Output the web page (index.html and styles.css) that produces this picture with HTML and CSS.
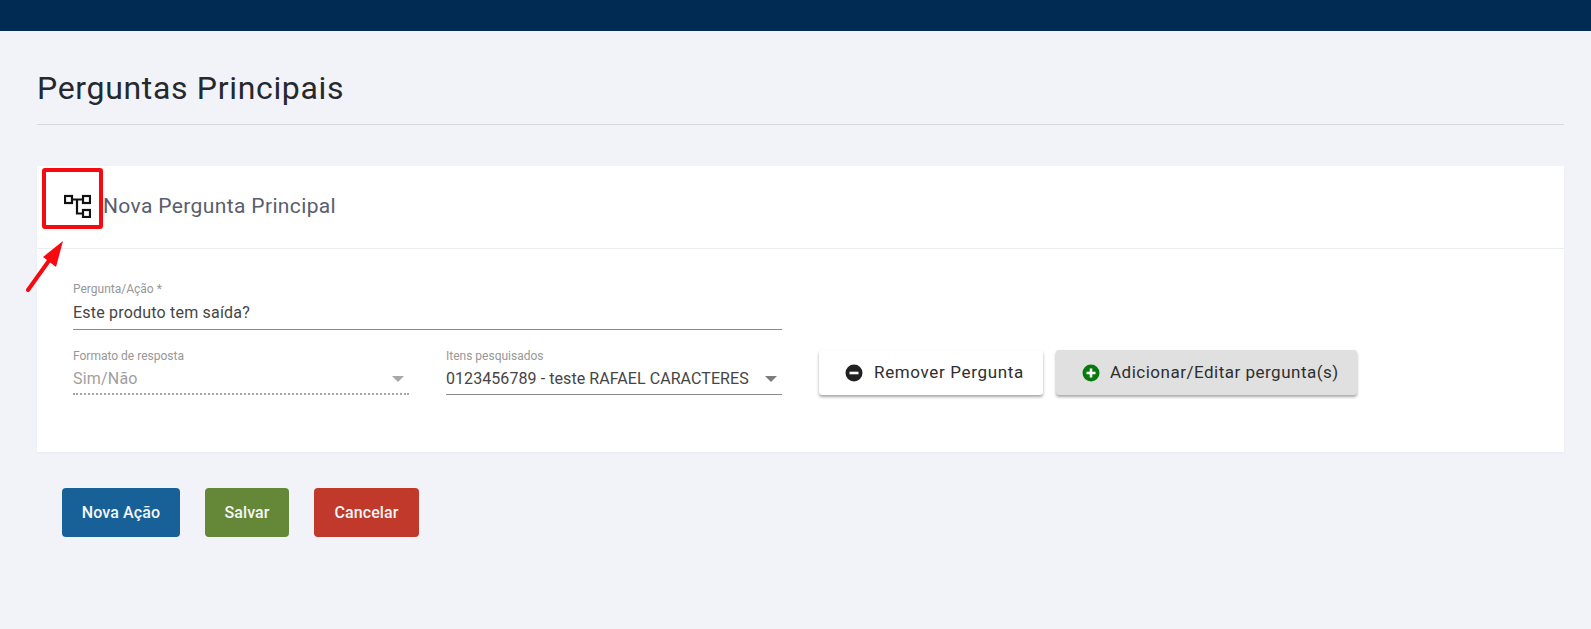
FILE: index.html
```html
<!DOCTYPE html>
<html lang="pt-BR">
<head>
    <meta charset="UTF-8">
    <title>Perguntas Principais</title>
    <link rel="stylesheet" href="styles.css">
</head>
<body>
    <div class="topbar"></div>

    <div class="page">
        <h1 class="page-title">Perguntas Principais</h1>

        <div class="card">
            <div class="card-header">
                <svg class="tree-icon" width="27" height="24" viewBox="0 0 27 24" fill="none" stroke="#111" stroke-width="2.2">
                    <rect x="1" y="2" width="7" height="7"/>
                    <rect x="19" y="2" width="7" height="7"/>
                    <rect x="19" y="16" width="7" height="7"/>
                    <path d="M8 5.5H19M13 5.5V19.5H19"/>
                </svg>
                <h2 class="card-title">Nova Pergunta Principal</h2>
            </div>

            <div class="card-body">
                <div class="field field-full">
                    <label class="field-label">Pergunta/Ação *</label>
                    <div class="field-value">Este produto tem saída?</div>
                </div>

                <div class="form-row">
                    <div class="field field-half field-disabled">
                        <label class="field-label">Formato de resposta</label>
                        <div class="field-value">Sim/Não<span class="caret"></span></div>
                    </div>
                    <div class="field field-half">
                        <label class="field-label">Itens pesquisados</label>
                        <div class="field-value value-tight">0123456789 - teste RAFAEL CARACTERES<span class="caret"></span></div>
                    </div>

                    <button class="raised-btn btn-remove">
                        <svg width="18" height="18" viewBox="0 0 18 18"><circle cx="9" cy="9" r="8.5" fill="#212121"/><rect x="4.5" y="7.7" width="9" height="2.6" fill="#fff"/></svg>
                        Remover Pergunta
                    </button>
                    <button class="raised-btn btn-add">
                        <svg width="18" height="18" viewBox="0 0 18 18"><circle cx="9" cy="9" r="8.5" fill="#087a0c"/><path d="M4.5 9h9M9 4.5v9" stroke="#fff" stroke-width="2.6"/></svg>
                        Adicionar/Editar pergunta(s)
                    </button>
                </div>
            </div>
        </div>

        <div class="actions">
            <button class="action-btn btn-blue">Nova Ação</button>
            <button class="action-btn btn-green">Salvar</button>
            <button class="action-btn btn-red">Cancelar</button>
        </div>
    </div>

    <!-- marcacao feita sobre o print -->
    <div class="mark-box"></div>
    <svg class="mark-arrow" width="44" height="56" viewBox="0 0 44 56">
        <path d="M3 52L28 17" stroke="#f8090f" stroke-width="4" stroke-linecap="round"/>
        <path d="M38 3L18 19L31 29Z" fill="#f8090f"/>
    </svg>
</body>
</html>
```

FILE: styles.css
```css
* {
    box-sizing: border-box;
}

body {
    margin: 0;
    min-height: 629px;
    background: #f1f3f9;
    font-family: Roboto, "Open Sans", sans-serif;
    color: #212529;
    overflow: hidden;
}

.topbar {
    height: 31px;
    background: #012b52;
}

.page {
    padding: 0 27px 0 37px;
}

.page-title {
    margin: 0;
    height: 94px;
    padding-top: 37px;
    border-bottom: 1px solid #d8d9de;
    font-size: 32px;
    line-height: 40px;
    font-weight: 400;
    letter-spacing: 0.67px;
    color: #25282d;
}

.card {
    margin-top: 41px;
    height: 286px;
    background: #fff;
    box-shadow: 0 1px 3px rgba(0, 0, 0, 0.03);
}

.card-header {
    display: flex;
    align-items: center;
    height: 83px;
    padding: 0 0 3px 27px;
    border-bottom: 1px solid #ebedf2;
}

.tree-icon {
    flex: none;
}

.card-title {
    margin: 0 0 0 12px;
    font-size: 21px;
    font-weight: 400;
    letter-spacing: 0.37px;
    color: #595d6e;
}

.card-body {
    padding: 33px 36px 0;
}

.form-row {
    display: flex;
    align-items: flex-start;
    margin-top: 19px;
}

.field-full {
    width: 709px;
    height: 48px;
    border-bottom: 1px solid #8a8a8a;
}

.field-half {
    width: 336px;
    height: 46px;
    border-bottom: 1px solid #8a8a8a;
}

.field-half + .field-half {
    margin-left: 37px;
}

.field-disabled {
    border-bottom: 2px dotted #a5a5a5;
}

.field-disabled .field-value {
    color: #a0a0a0;
}

.field-label {
    display: block;
    font-size: 12px;
    line-height: 15px;
    color: #979797;
}

.field-value {
    display: flex;
    justify-content: space-between;
    align-items: center;
    margin-top: 4px;
    font-size: 16px;
    line-height: 24px;
    letter-spacing: 0.2px;
    color: #454545;
}

.field-half .field-value {
    margin-top: 3px;
}

.value-tight {
    letter-spacing: 0.07px;
}

.caret {
    width: 0;
    height: 0;
    margin-right: 5px;
    border-left: 6px solid transparent;
    border-right: 6px solid transparent;
    border-top: 6px solid #7d7d7d;
}

.field-disabled .caret {
    border-top-color: #a8a8a8;
}

.raised-btn {
    display: flex;
    align-items: center;
    gap: 10px;
    height: 45px;
    margin-top: 1px;
    padding-bottom: 2px;
    border: 0;
    border-radius: 3px;
    font-family: inherit;
    font-size: 17px;
    letter-spacing: 0.5px;
    color: #2e2e2e;
    box-shadow: 0 2px 3px rgba(0, 0, 0, 0.35);
}

.raised-btn svg {
    margin-top: 2px;
}

.btn-remove {
    width: 224px;
    margin-left: 37px;
    padding-left: 26px;
    gap: 11px;
    letter-spacing: 0.65px;
    background: #fff;
}

.btn-add {
    width: 301px;
    margin-left: 13px;
    padding-left: 26px;
    background: #e0e0e0;
}

.actions {
    display: flex;
    gap: 25px;
    margin-top: 36px;
    padding-left: 25px;
}

.action-btn {
    height: 49px;
    padding: 0;
    border: 0;
    border-radius: 4px;
    font-family: inherit;
    font-size: 16px;
    font-weight: 500;
    letter-spacing: 0.1px;
    color: #f4f6f8;
}

.btn-blue {
    width: 118px;
    background: #176198;
}

.btn-green {
    width: 84px;
    background: #648738;
}

.btn-red {
    width: 105px;
    background: #c1392b;
}

.mark-box {
    position: absolute;
    left: 42px;
    top: 168px;
    width: 61px;
    height: 61px;
    border: 4px solid #f8090f;
    border-radius: 3px;
}

.mark-arrow {
    position: absolute;
    left: 25px;
    top: 238px;
}
```
